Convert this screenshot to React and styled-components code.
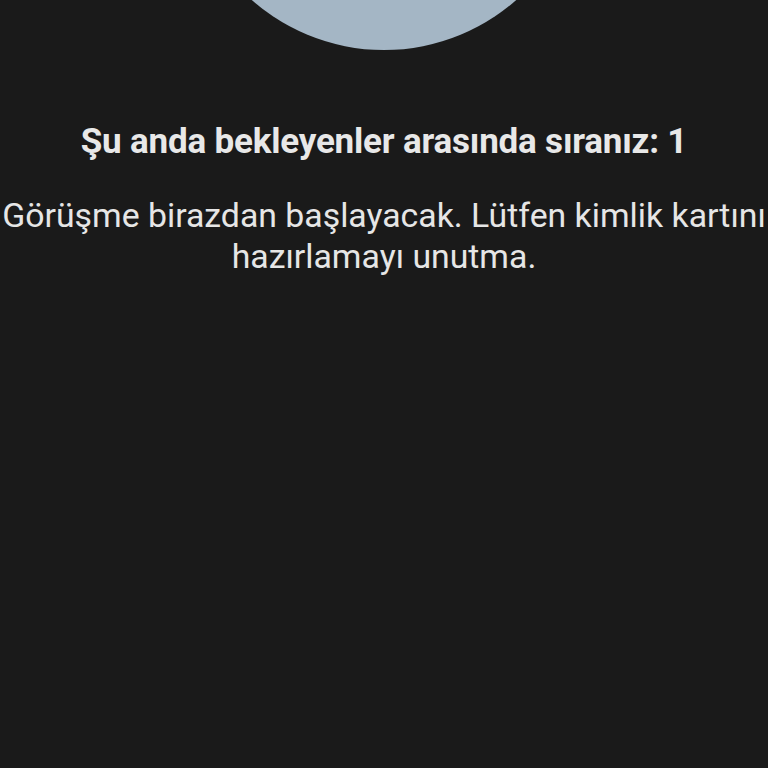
import React from 'react';
import styled, { createGlobalStyle } from 'styled-components';

const Global = createGlobalStyle`
  html, body {
    margin: 0;
    padding: 0;
    background: #1a1a1a;
  }
  body {
    font-family: Roboto, "Noto Sans", sans-serif;
  }
`;

const Screen = styled.div`
  width: 768px;
  height: 768px;
  overflow: hidden;
  background: #1a1a1a;
  display: flex;
  flex-direction: column;
  align-items: center;
`;

const Avatar = styled.div`
  width: 400px;
  height: 400px;
  flex-shrink: 0;
  margin-top: -350px;
  border-radius: 50%;
  background: #a4b6c5;
`;

const Title = styled.h1`
  margin: 70px 0 0;
  color: #e8e8e8;
  font-size: 35px;
  font-weight: 700;
  line-height: 44px;
  text-align: center;
  letter-spacing: -0.2px;
  white-space: nowrap;
`;

const Message = styled.p`
  margin: 31px 0 0;
  color: #e6e6e6;
  font-size: 33.8px;
  font-weight: 400;
  line-height: 41px;
  text-align: center;
  white-space: nowrap;
`;

const App = () => {
  return (
    <Screen>
      <Global />
      <Avatar />
      <Title>Şu anda bekleyenler arasında sıranız: 1</Title>
      <Message>
        Görüşme birazdan başlayacak. Lütfen kimlik kartını
        <br />
        hazırlamayı unutma.
      </Message>
    </Screen>
  );
};

export default App;
